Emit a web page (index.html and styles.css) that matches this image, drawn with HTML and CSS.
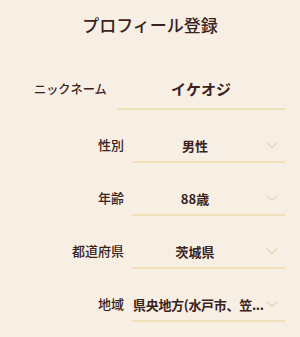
FILE: index.html
```html
<!DOCTYPE html>
<html lang="ja">

<head>
    <meta charset="UTF-8">
    <meta name="viewport" content="width=device-width, initial-scale=1.0">
    <title>プロフィール登録</title>
    <link rel="stylesheet" href="styles.css">
</head>

<body>

    <div class="container">
        <h1 class="title">プロフィール登録</h1>

        <div class="form">
            <div class="row row-nickname">
                <label class="label">ニックネーム</label>
                <div class="field field-text">イケオジ</div>
            </div>

            <div class="row">
                <label class="label">性別</label>
                <div class="field field-select">
                    <span class="value">男性</span>
                    <svg class="chevron" width="12" height="6" viewBox="0 0 12 6">
                        <polyline points="0.5,0.5 6,5.5 11.5,0.5" fill="none" stroke="#e6d6b4" stroke-width="1.2" />
                    </svg>
                </div>
            </div>

            <div class="row">
                <label class="label">年齢</label>
                <div class="field field-select">
                    <span class="value">88歳</span>
                    <svg class="chevron" width="12" height="6" viewBox="0 0 12 6">
                        <polyline points="0.5,0.5 6,5.5 11.5,0.5" fill="none" stroke="#e6d6b4" stroke-width="1.2" />
                    </svg>
                </div>
            </div>

            <div class="row">
                <label class="label">都道府県</label>
                <div class="field field-select">
                    <span class="value">茨城県</span>
                    <svg class="chevron" width="12" height="6" viewBox="0 0 12 6">
                        <polyline points="0.5,0.5 6,5.5 11.5,0.5" fill="none" stroke="#e6d6b4" stroke-width="1.2" />
                    </svg>
                </div>
            </div>

            <div class="row">
                <label class="label">地域</label>
                <div class="field field-select">
                    <span class="value value-long">県央地方(水戸市、笠...</span>
                    <svg class="chevron" width="12" height="6" viewBox="0 0 12 6">
                        <polyline points="0.5,0.5 6,5.5 11.5,0.5" fill="none" stroke="#e6d6b4" stroke-width="1.2" />
                    </svg>
                </div>
            </div>
        </div>
    </div>

</body>

</html>
```

FILE: styles.css
```css
body {
    background: #f7efe4;
    margin: 0;
    font-family: 'Noto Sans CJK JP', 'Noto Sans', sans-serif;
    color: #3a2220;
}

.container {
    width: 300px;
    height: 337px;
    overflow: hidden;
}

.title {
    margin: 13px 0 33px 0;
    font-size: 17px;
    line-height: 24px;
    font-weight: 500;
    text-align: center;
}

.form {
    display: flex;
    flex-direction: column;
    gap: 19px;
    padding-right: 15px;
}

.row {
    display: flex;
    align-items: flex-start;
    gap: 8px;
}

.label {
    width: 124px;
    flex-shrink: 0;
    text-align: right;
    font-size: 13px;
    font-weight: 500;
    line-height: 32px;
}

.field {
    flex: 1;
    min-width: 0;
    border-bottom: 2px solid #efe0b8;
}

.row-nickname {
    gap: 10px;
}

.row-nickname .label {
    width: auto;
    padding-left: 34px;
    font-size: 12.2px;
    line-height: 38px;
}

.field-text {
    height: 38px;
    line-height: 38px;
    text-align: center;
    font-size: 15px;
    font-weight: 700;
}

.field-select {
    height: 32px;
    display: flex;
    align-items: center;
    padding-right: 7px;
}

.value {
    flex: 1;
    min-width: 0;
    text-align: center;
    font-size: 13px;
    font-weight: 700;
    white-space: nowrap;
    overflow: hidden;
    padding-right: 8px;
}

.value-long {
    text-align: left;
    padding-right: 0;
    padding-left: 1px;
    letter-spacing: -0.3px;
}

.chevron {
    flex-shrink: 0;
}
```
